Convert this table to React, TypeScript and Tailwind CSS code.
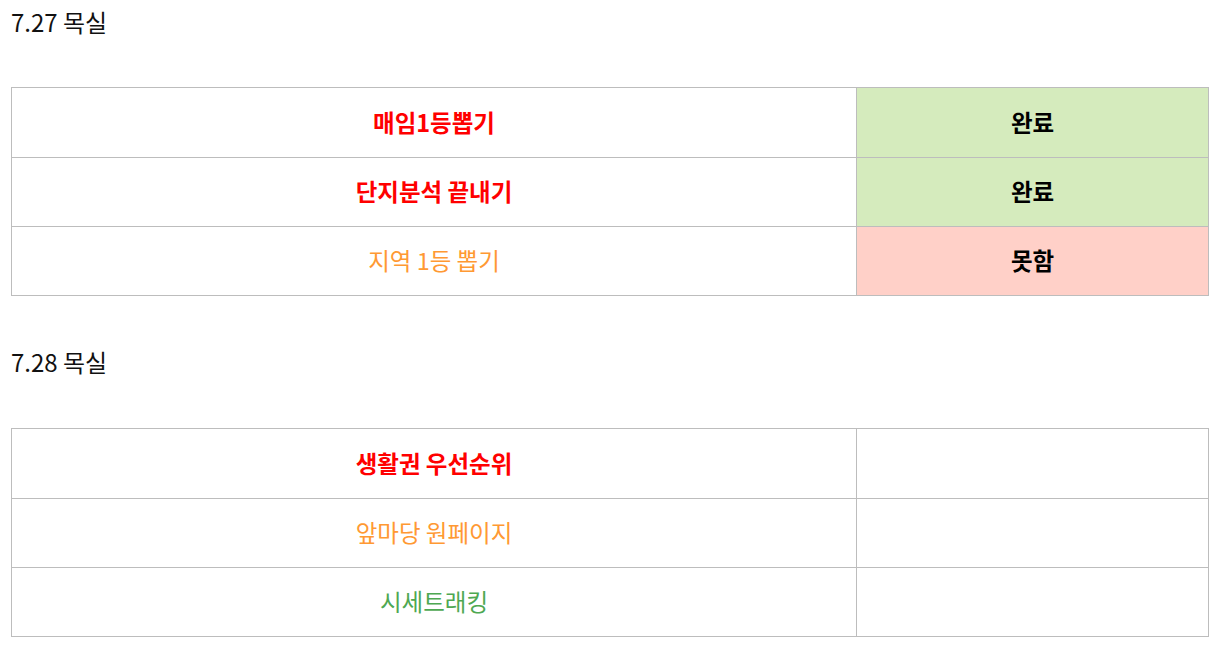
import React from "react";

type Row = { label: string; color: string; bold: boolean; status?: string; bg?: string };

const t1: Row[] = [
  { label: "매임1등뽑기", color: "text-[#ff0000]", bold: true, status: "완료", bg: "bg-[#d5ebbd]" },
  { label: "단지분석 끝내기", color: "text-[#ff0000]", bold: true, status: "완료", bg: "bg-[#d5ebbd]" },
  { label: "지역 1등 뽑기", color: "text-[#ff9933]", bold: false, status: "못함", bg: "bg-[#ffd0c8]" },
];

const t2: Row[] = [
  { label: "생활권 우선순위", color: "text-[#ff0000]", bold: true },
  { label: "앞마당 원페이지", color: "text-[#ff9933]", bold: false },
  { label: "시세트래킹", color: "text-[#4ea852]", bold: false },
];

function Table({ rows }: { rows: Row[] }) {
  return (
    <div className="w-[1198px] border border-[#bdbdbd]">
      {rows.map((r, i) => (
        <div key={i} className={`flex h-[69px] ${i > 0 ? "border-t border-[#bdbdbd]" : ""}`}>
          <div
            className={`w-[844px] flex items-center justify-center text-[23.5px] ${r.color} ${r.bold ? "font-bold" : "font-normal"}`}
          >
            {r.label}
          </div>
          <div
            className={`flex-1 border-l border-[#bdbdbd] flex items-center justify-center text-[23.5px] font-bold text-black ${r.bg ?? ""}`}
          >
            {r.status ?? ""}
          </div>
        </div>
      ))}
    </div>
  );
}

export default function App() {
  return (
    <div
      className="w-[1220px] h-[656px] bg-white pl-[11px] flex flex-col"
      style={{ fontFamily: '"Noto Sans CJK KR", "Noto Sans", sans-serif' }}
    >
      <div className="h-[44px] flex items-center text-[24px] text-[#111]">7.27 목실</div>
      <div className="h-[43px]" />
      <Table rows={t1} />
      <div className="h-[132px] flex items-center text-[24px] text-[#111]">7.28 목실</div>
      <Table rows={t2} />
    </div>
  );
}
